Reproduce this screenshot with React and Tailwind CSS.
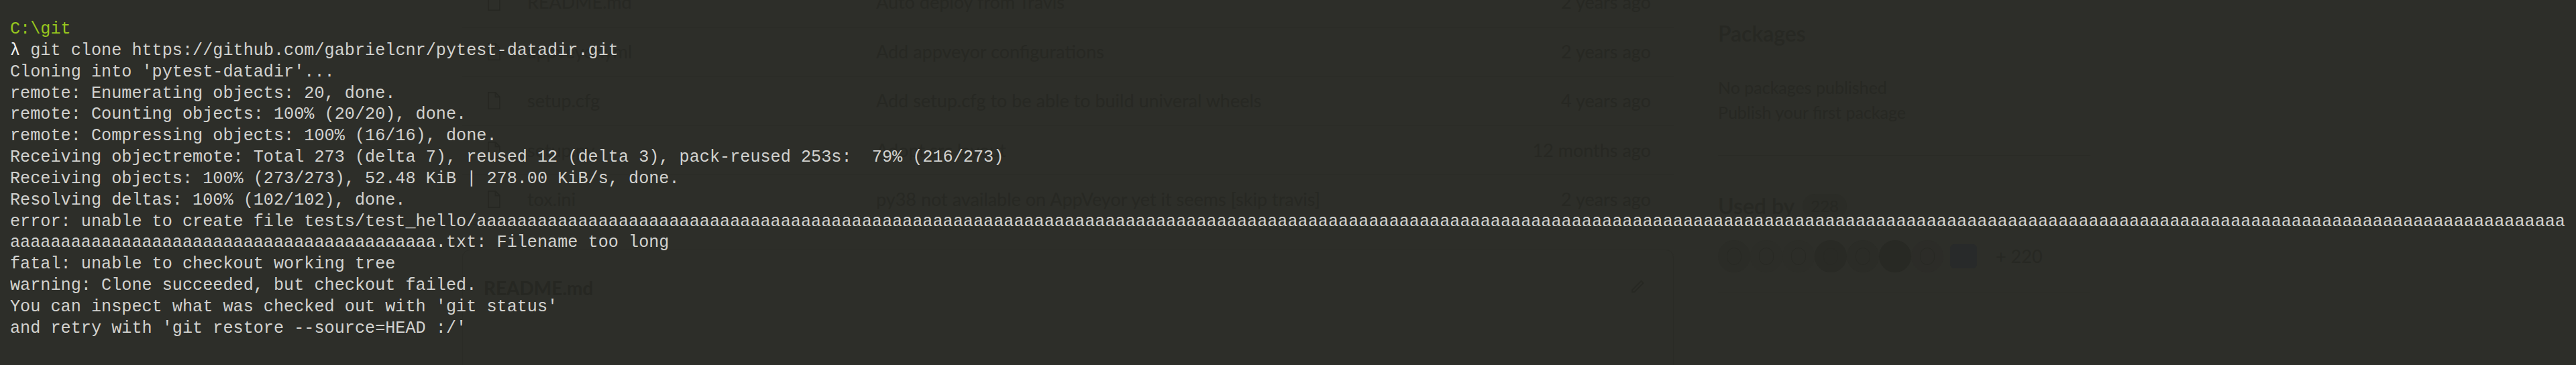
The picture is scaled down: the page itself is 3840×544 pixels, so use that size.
import React from 'react';

const TERM_FONT = { fontFamily: '"Liberation Mono", "DejaVu Sans Mono", monospace' };

const lines = [
  { kind: 'path', text: 'C:\\git' },
  { kind: 'cmd', text: ' git clone https://github.com/gabrielcnr/pytest-datadir.git' },
  { text: "Cloning into 'pytest-datadir'..." },
  { text: 'remote: Enumerating objects: 20, done.' },
  { text: 'remote: Counting objects: 100% (20/20), done.' },
  { text: 'remote: Compressing objects: 100% (16/16), done.' },
  { text: 'Receiving objectremote: Total 273 (delta 7), reused 12 (delta 3), pack-reused 253s:  79% (216/273)' },
  { text: 'Receiving objects: 100% (273/273), 52.48 KiB | 278.00 KiB/s, done.' },
  { text: 'Resolving deltas: 100% (102/102), done.' },
  { text: 'error: unable to create file tests/test_hello/' + 'a'.repeat(206) },
  { text: 'a'.repeat(42) + '.txt: Filename too long' },
  { text: 'fatal: unable to checkout working tree' },
  { text: 'warning: Clone succeeded, but checkout failed.' },
  { text: "You can inspect what was checked out with 'git status'" },
  { text: "and retry with 'git restore --source=HEAD :/'" },
];

const files = [
  { name: 'README.md', msg: 'Auto deploy from Travis', when: '2 years ago' },
  { name: 'appveyor.yml', msg: 'Add appveyor configurations', when: '2 years ago' },
  { name: 'setup.cfg', msg: 'Add setup.cfg to be able to build univeral wheels', when: '4 years ago' },
  { name: 'setup.py', msg: 'Adopt src layout', when: '12 months ago' },
  { name: 'tox.ini', msg: 'py38 not available on AppVeyor yet it seems [skip travis]', when: '2 years ago' },
];

function FileIcon() {
  return (
    <svg width="20" height="26" viewBox="0 0 12 16" fill="none" stroke="#262722" strokeWidth="1">
      <path d="M1 .5h6.5L11.5 4.5V15.5H1z" />
      <path d="M7.5 .5V4.5H11.5" />
    </svg>
  );
}

function Pencil() {
  return (
    <svg width="22" height="28" viewBox="0 0 14 16" fill="none" stroke="#272823" strokeWidth="1.2">
      <path d="M10.5 1.5l2 2L4 12H2v-2z" />
    </svg>
  );
}

function Avatar({ shade }) {
  return (
    <div className={`w-[48px] h-[48px] rounded-full ${shade} flex items-center justify-center`}>
      <div className="w-[22px] h-[26px] rounded-full border border-[#282924]" />
    </div>
  );
}

function GhostPage() {
  return (
    <div
      className="col-start-1 row-start-1 flex pl-[689px] text-[#272823]"
      style={{ fontFamily: 'Lato, "Noto Sans", sans-serif' }}
    >
      <div className="w-[1806px] mt-[-33px] flex flex-col">
        {files.map((f) => (
          <div key={f.name} className="flex items-center h-[73.5px] border-b border-[#2a2b26] text-[27px]">
            <div className="pl-[37px] w-[97px]">
              <FileIcon />
            </div>
            <div className="w-[520px]">{f.name}</div>
            <div className="flex-1">{f.msg}</div>
            <div className="pr-[34px]">{f.when}</div>
          </div>
        ))}
        <div className="mt-[37px] border border-[#2a2b26] rounded-t-[12px] h-[200px]">
          <div className="flex items-center justify-between h-[112px] pl-[31px] pr-[42px]">
            <span className="text-[28px] font-bold text-[#262722]">README.md</span>
            <Pencil />
          </div>
        </div>
      </div>
      <div className="ml-[66px] w-[555px] flex flex-col">
        <div className="mt-[28px] text-[32px] font-semibold leading-[44px]">Packages</div>
        <div className="mt-[40px] text-[25px] leading-[37px]">No packages published</div>
        <div className="text-[25px] leading-[37px]">Publish your first package</div>
        <div className="mt-[45px] border-t border-[#2a2b26]" />
        <div className="mt-[53px] flex items-center gap-[12px] h-[44px]">
          <span className="text-[32px] font-semibold">Used by</span>
          <span className="rounded-full bg-[#2b2c27] px-[12px] text-[24px]">228</span>
        </div>
        <div className="mt-[27px] flex items-center h-[52px]">
          <Avatar shade="bg-[#2b2c27]" />
          <Avatar shade="bg-[#2c2d28]" />
          <Avatar shade="bg-[#2c2d28]" />
          <Avatar shade="bg-[#292a25]" />
          <Avatar shade="bg-[#2b2c27]" />
          <Avatar shade="bg-[#282924]" />
          <Avatar shade="bg-[#2c2c28]" />
          <div className="w-[40px] h-[36px] ml-[10px] rounded-[6px] bg-[#282a2a]" />
          <span className="ml-[28px] text-[27px]">+ 220</span>
        </div>
        <div className="mt-[28px] border-t border-[#2a2b26]" />
      </div>
    </div>
  );
}

export default function App() {
  return (
    <div className="grid w-[3840px] h-[544px] overflow-hidden bg-[#2d2e29]">
      <GhostPage />
      <div
        className="col-start-1 row-start-1 pt-[28px] pl-[15px] text-[25.19px] leading-[31.85px] text-[#d2d2cf]"
        style={TERM_FONT}
      >
        {lines.map((l, i) => (
          <div key={i} className="whitespace-pre overflow-hidden">
            {l.kind === 'path' && <span className="text-[#97c61e]">{l.text}</span>}
            {l.kind === 'cmd' && (
              <>
                <span className="text-[#f2f2f2]">λ</span>
                {l.text}
              </>
            )}
            {!l.kind && l.text}
          </div>
        ))}
      </div>
    </div>
  );
}
